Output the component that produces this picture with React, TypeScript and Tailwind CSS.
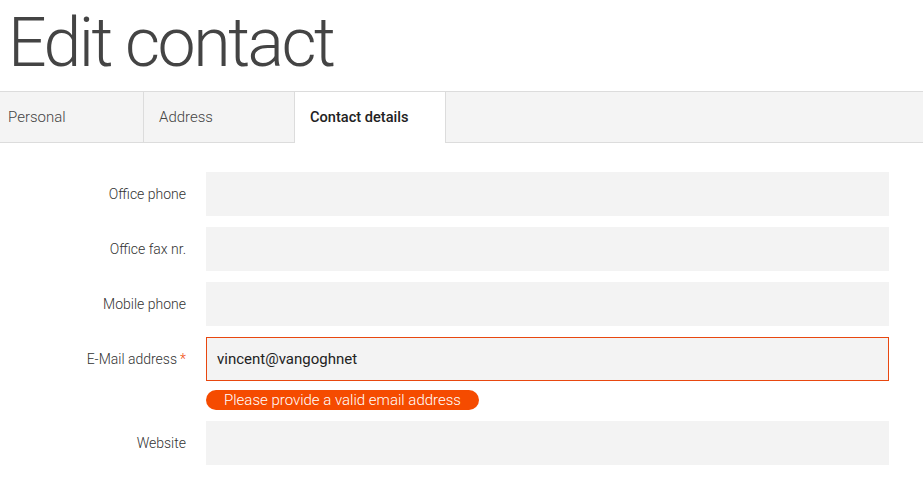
import React from "react";

const rows = [
  { label: "Office phone", value: "" },
  { label: "Office fax nr.", value: "" },
  { label: "Mobile phone", value: "" },
  { label: "E-Mail address", value: "vincent@vangoghnet", required: true, error: "Please provide a valid email address" },
  { label: "Website", value: "" },
];

export default function App() {
  return (
    <div className="w-[923px] h-[493px] bg-white overflow-hidden" style={{ fontFamily: "Roboto, 'Liberation Sans', sans-serif" }}>
      <h1 className="pt-[9px] pl-[8px] text-[68px] leading-[68px] font-light tracking-[-2.5px] text-[#444]">Edit contact</h1>
      <div className="mt-[14px] flex h-[52px] bg-[#f4f4f4] border-y border-[#dcdcdc]">
        <div className="w-[144px] border-r border-[#dcdcdc] pl-[8px] flex items-center text-[15px] font-light text-[#444]">Personal</div>
        <div className="w-[151px] border-r border-[#dcdcdc] pl-[15px] flex items-center text-[15px] font-light text-[#444]">Address</div>
        <div className="w-[151px] border-r border-[#dcdcdc] bg-white -mb-px pl-[15px] flex items-center text-[14.6px] font-medium text-[#222]">Contact details</div>
      </div>
      <div className="pt-[29px] flex flex-col gap-[11px]">
        {rows.map((r) => (
          <div key={r.label} className="flex flex-col">
            <div className="flex items-center">
              <div className="w-[206px] pr-[20px] text-right text-[14px] font-light text-[#333]">
                {r.label}
                {r.required && <span className="text-[#f04a0a] ml-[3px]">*</span>}
              </div>
              <div
                className={
                  "w-[683px] h-[44px] bg-[#f3f3f3] flex items-center pl-[10px] text-[15px] text-[#222] " +
                  (r.error ? "border border-[#e8470f]" : "")
                }
              >
                {r.value}
              </div>
            </div>
            {r.error && (
              <div className="pl-[206px] mt-[9px]">
                <div className="w-[273px] h-[20px] rounded-full bg-[#f54b00] text-white text-[15px] font-light leading-[20px] pl-[18px]">
                  {r.error}
                </div>
              </div>
            )}
          </div>
        ))}
      </div>
    </div>
  );
}
